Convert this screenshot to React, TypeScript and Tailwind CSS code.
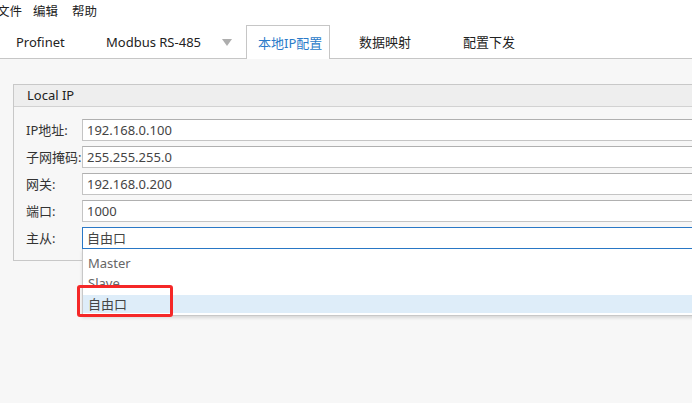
import React from "react";

const font = { fontFamily: '"Noto Sans", "Noto Sans CJK SC", sans-serif' };

function Row({ label, value, active }: { label: string; value: string; active?: boolean }) {
  return (
    <div className="flex h-[22px] items-center">
      <div className="w-[56px] shrink-0 text-[13px] text-[#333] leading-[22px] whitespace-nowrap">{label}</div>
      <div
        className={
          active
            ? "h-[22px] flex-1 bg-white border border-[#2a78c6] pl-[4px] text-[13px] leading-[20px] text-[#444]"
            : "h-[22px] flex-1 bg-white border border-[#c4c4c4] border-t-[#b0b0b0] pl-[4px] text-[13px] leading-[20px] text-[#444]"
        }
      >
        {value}
      </div>
    </div>
  );
}

export default function App() {
  return (
    <div className="relative w-[692px] h-[403px] overflow-hidden bg-[#f7f7f7]" style={font}>
      {/* menu bar */}
      <div className="h-[25px] bg-white flex items-center text-[12.5px] text-[#222]">
        <span className="ml-[-3px]">文件</span>
        <span className="ml-[11px]">编辑</span>
        <span className="ml-[14px]">帮助</span>
      </div>
      {/* tab bar */}
      <div className="h-[34px] bg-white border-b border-[#c6c6c6] flex items-stretch text-[13px] text-[#222]">
        <div className="w-[106px] pl-[16px] flex items-center pt-[3px]">Profinet</div>
        <div className="w-[116px] flex items-center pt-[3px]">Modbus RS-485</div>
        <div className="w-[24px] flex items-center pt-[2px]">
          <svg width="10" height="7" viewBox="0 0 10 7">
            <polygon points="0,0 10,0 5,7" fill="#aeaeae" />
          </svg>
        </div>
        <div className="w-[84px] bg-white border border-[#c6c6c6] border-b-0 mb-[-1px] pl-[11px] flex items-center pt-[3px] text-[#2b7bc9]">
          本地IP配置
        </div>
        <div className="w-[29px]" />
        <div className="w-[104px] flex items-center pt-[3px]">数据映射</div>
        <div className="flex items-center pt-[3px]">配置下发</div>
      </div>
      {/* content */}
      <div className="pt-[25px] pl-[13px]">
        <div className="w-[720px] border-l border-t border-b border-[#c8c8c8] bg-[#f7f7f7]">
          <div className="h-[22px] bg-[#eeeeee] border-b border-[#d2d2d2] pl-[13px] flex items-center text-[13px] text-[#222]">
            Local IP
          </div>
          <div className="pl-[12px] pt-[12px] pb-[11px] flex flex-col gap-[5px]">
            <Row label="IP地址:" value="192.168.0.100" />
            <Row label="子网掩码:" value="255.255.255.0" />
            <Row label="网关:" value="192.168.0.200" />
            <Row label="端口:" value="1000" />
            <Row label="主从:" value="自由口" active />
          </div>
        </div>
      </div>
      {/* dropdown */}
      <div className="absolute left-[82px] top-[249px] w-[640px] bg-white border border-t-0 border-[#c8c8c8] shadow-[0_2px_3px_rgba(0,0,0,0.12)] pt-[4px] pb-[2px] text-[13px]">
        <div className="h-[20px] leading-[20px] pl-[5px] text-[#666]">Master</div>
        <div className="h-[22px]">
          <div className="h-[12px] overflow-hidden">
            <div className="h-[20px] leading-[20px] pl-[5px] text-[#666]">Slave</div>
          </div>
        </div>
        <div className="h-[18px] leading-[18px] pl-[5px] bg-[#deedf9] text-[#444]">自由口</div>
      </div>
      {/* red annotation */}
      <div className="absolute left-[77px] top-[285px] w-[96px] h-[32px] border-[3px] border-[#f52828] rounded-[3px]" />
    </div>
  );
}
